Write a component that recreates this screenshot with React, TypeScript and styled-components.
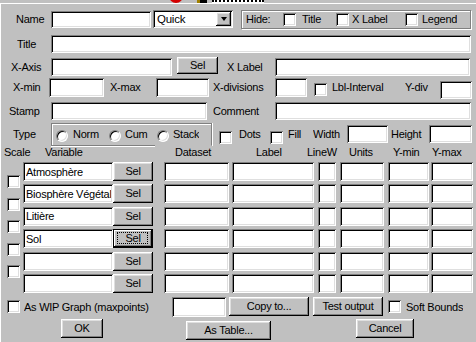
import React from "react";
import styled, { createGlobalStyle, css } from "styled-components";

const GlobalStyle = createGlobalStyle`
  html, body { margin: 0; padding: 0; background: #c0c0c0; }
  body { font-family: "Liberation Sans", Arial, sans-serif; font-size: 11px; color: #000; }
  * { box-sizing: border-box; }
`;

const sunken = css`
  box-shadow: inset 1px 1px #808080, inset -1px -1px #fff, inset 2px 2px #000,
    inset -2px -2px #dfdfdf;
`;

const raised = css`
  box-shadow: inset -1px -1px #000, inset 1px 1px #fff, inset -2px -2px #808080,
    inset 2px 2px #dfdfdf;
`;

type Box = { $ml?: number; $dy?: number; $w?: number; $h?: number };

const Screen = styled.div`
  width: 476px;
  height: 342px;
  overflow: hidden;
  background: #c0c0c0;
  font-family: "Liberation Sans", Arial, sans-serif;
  font-size: 11px;
  letter-spacing: -0.25px;
  color: #000;
`;

const TopStrip = styled.div`
  height: 3px;
  display: flex;
  align-items: flex-end;
  overflow: hidden;
`;

const RedBlob = styled.span`
  flex-shrink: 0;
  margin-left: 169px;
  width: 14px;
  height: 14px;
  border-radius: 50%;
  background: #d40000;
`;

const TinyIcon = styled.span`
  flex-shrink: 0;
  margin-left: 11px;
  width: 13px;
  height: 3px;
  background: linear-gradient(90deg, #c0c0c0 0 3px, #a08000 3px 6px, #000 6px 13px);
`;

const TitleSnip = styled.span`
  flex-shrink: 0;
  margin-left: 5px;
  width: 52px;
  height: 3px;
  background: #fff;
  border-top: 2px dotted #000;
`;

const Dialog = styled.div`
  height: 339px;
  border-top: 1px solid #fff;
  border-left: 1px solid #fff;
  display: flex;
  flex-direction: column;
`;

const Row = styled.div<{ $mt: number; $h: number }>`
  display: flex;
  align-items: flex-start;
  flex-shrink: 0;
  margin-top: ${(p) => p.$mt}px;
  height: ${(p) => p.$h}px;
`;

const Label = styled.span<Box>`
  display: block;
  flex-shrink: 0;
  margin-left: ${(p) => p.$ml ?? 0}px;
  margin-top: ${(p) => p.$dy ?? 0}px;
  width: ${(p) => (p.$w ? `${p.$w}px` : "auto")};
  height: ${(p) => p.$h ?? 18}px;
  line-height: ${(p) => p.$h ?? 18}px;
  white-space: nowrap;
  overflow: hidden;
`;

const Field = styled.input<Box>`
  flex-shrink: 0;
  margin: ${(p) => p.$dy ?? 0}px 0 0 ${(p) => p.$ml ?? 0}px;
  width: ${(p) => p.$w}px;
  height: ${(p) => p.$h ?? 18}px;
  border: 0;
  padding: 0 2px 0 3px;
  background: #fff;
  ${sunken};
  font: inherit;
  letter-spacing: inherit;
  color: #000;
  outline: none;
`;

const Btn = styled.button<Box & { $focus?: boolean }>`
  position: relative;
  flex-shrink: 0;
  margin: ${(p) => p.$dy ?? 0}px 0 0 ${(p) => p.$ml ?? 0}px;
  width: ${(p) => p.$w}px;
  height: ${(p) => p.$h ?? 19}px;
  padding: 0 0 1px;
  border: 0;
  background: #c0c0c0;
  font: inherit;
  letter-spacing: inherit;
  color: #000;
  ${raised};
  ${(p) =>
    p.$focus &&
    css`
      box-shadow: inset 0 0 0 1px #000, inset -2px -2px #000, inset 2px 2px #fff,
        inset -3px -3px #808080;
    `}
`;

const FocusRing = styled.span`
  position: absolute;
  left: 4px;
  right: 5px;
  top: 3px;
  bottom: 4px;
  border: 1px dotted #000;
`;

const Check = styled.span<Box>`
  display: block;
  flex-shrink: 0;
  width: 13px;
  height: 13px;
  margin: ${(p) => p.$dy ?? 0}px 0 0 ${(p) => p.$ml ?? 0}px;
  background: #fff;
  ${sunken};
`;

const RadioDot = styled.span<Box>`
  display: block;
  flex-shrink: 0;
  width: 12px;
  height: 12px;
  margin: 3px 0 0 ${(p) => p.$ml ?? 0}px;
  border-radius: 50%;
  background: #fff;
  border: 1px solid;
  border-color: #808080 #fff #fff #808080;
  box-shadow: inset 1px 1px #000, inset -1px -1px #dfdfdf;
`;

const Group = styled.div<Box & { $openBottom?: number }>`
  position: relative;
  display: flex;
  align-items: center;
  flex-shrink: 0;
  margin: ${(p) => p.$dy ?? 0}px 0 0 ${(p) => p.$ml ?? 0}px;
  width: ${(p) => p.$w}px;
  height: ${(p) => p.$h}px;
  padding-left: 4px;
  border: 1px solid #808080;
  box-shadow: inset 1px 1px #fff, 1px 1px #fff;
  ${(p) =>
    p.$openBottom &&
    css`
      border-bottom-color: transparent;
      box-shadow: inset 1px 1px #fff, 1px 0 #fff;
      &::after {
        content: "";
        position: absolute;
        left: -1px;
        bottom: -1px;
        width: ${p.$openBottom}px;
        height: 1px;
        background: #808080;
        box-shadow: 0 1px #fff;
      }
    `}
`;

const Combo = styled.div<Box>`
  display: flex;
  align-items: stretch;
  flex-shrink: 0;
  margin-left: ${(p) => p.$ml ?? 0}px;
  width: ${(p) => p.$w}px;
  height: ${(p) => p.$h}px;
  padding: 2px;
  background: #fff;
  ${sunken};
`;

const ComboText = styled.span`
  flex: 1;
  padding-left: 2px;
  line-height: 14px;
  font-size: 11.5px;
`;

const ComboButton = styled.span`
  width: 15px;
  display: flex;
  align-items: center;
  justify-content: center;
  background: #c0c0c0;
  ${raised};
`;

const Arrow = styled.span`
  width: 0;
  height: 0;
  border-left: 3.5px solid transparent;
  border-right: 3.5px solid transparent;
  border-top: 4px solid #000;
`;

const Header = styled.span<Box>`
  display: block;
  flex-shrink: 0;
  margin-left: ${(p) => p.$ml ?? 0}px;
  width: ${(p) => (p.$w ? `${p.$w}px` : "auto")};
  line-height: 12px;
  white-space: nowrap;
`;

const DataArea = styled.div`
  display: flex;
  flex-shrink: 0;
  margin-top: 4px;
  height: 131px;
`;

const CheckColumn = styled.div`
  display: flex;
  flex-direction: column;
  gap: 9.5px;
  margin-left: 6px;
  padding-top: 13px;
`;

const RowStack = styled.div`
  display: flex;
  flex-direction: column;
  gap: 3.4px;
  margin-left: 3px;
`;

const DataRow = styled.div`
  display: flex;
  height: 19px;
`;

const variables = ["Atmosphère", "Biosphère Végétale", "Litière", "Sol", "", ""];

export default function App() {
  return (
    <Screen>
      <GlobalStyle />
      <TopStrip>
        <RedBlob />
        <TinyIcon />
        <TitleSnip />
      </TopStrip>
      <Dialog>
        <Row $mt={6} $h={19}>
          <Label $ml={15} $w={35} $dy={1} $h={17}>Name</Label>
          <Field $w={100} $h={17} $dy={1} />
          <Combo $ml={2} $w={80} $h={18}>
            <ComboText>Quick</ComboText>
            <ComboButton>
              <Arrow />
            </ComboButton>
          </Combo>
          <Group $ml={8} $w={230} $h={19}>
            <Label $w={37} $h={17}>Hide:</Label>
            <Check />
            <Label $ml={6} $w={34} $h={17}>Title</Label>
            <Check />
            <Label $ml={3} $w={53} $h={17}>X Label</Label>
            <Check />
            <Label $ml={4} $h={17}>Legend</Label>
          </Group>
        </Row>

        <Row $mt={6} $h={18}>
          <Label $ml={16} $w={34}>Title</Label>
          <Field $w={420} />
        </Row>

        <Row $mt={5} $h={18}>
          <Label $ml={10} $w={40}>X-Axis</Label>
          <Field $w={121} />
          <Btn $ml={5} $w={41} $h={17} $dy={-1}>Sel</Btn>
          <Label $ml={9} $w={48}>X Label</Label>
          <Field $w={195} />
        </Row>

        <Row $mt={2} $h={21}>
          <Label $ml={12} $w={36} $h={19}>X-min</Label>
          <Field $w={55} $h={19} />
          <Label $ml={6} $w={46} $h={19}>X-max</Label>
          <Field $w={53} $h={19} />
          <Label $ml={4} $w={62} $h={19}>X-divisions</Label>
          <Field $w={32} $h={19} />
          <Check $ml={7} $dy={5} />
          <Label $ml={5} $w={73} $h={19}>Lbl-Interval</Label>
          <Label $w={35} $h={19}>Y-div</Label>
          <Field $w={32} $h={18} $dy={3} />
        </Row>

        <Row $mt={3} $h={18}>
          <Label $ml={8} $w={42}>Stamp</Label>
          <Field $w={156} />
          <Label $ml={6} $w={62}>Comment</Label>
          <Field $w={196} />
        </Row>

        <Row $mt={3} $h={23}>
          <Label $ml={12} $w={38} $h={23}>Type</Label>
          <Group $w={161} $h={23} $openBottom={104}>
            <RadioDot />
            <Label $ml={5} $w={31} $h={21}>Norm</Label>
            <RadioDot $ml={5} />
            <Label $ml={4} $w={27} $h={21}>Cum</Label>
            <RadioDot $ml={5} />
            <Label $ml={4} $h={21}>Stack</Label>
          </Group>
          <Check $ml={7} $dy={8} />
          <Label $ml={7} $w={31} $h={23}>Dots</Label>
          <Check $dy={8} />
          <Label $ml={5} $w={25} $h={23}>Fill</Label>
          <Label $w={34} $h={23}>Width</Label>
          <Field $w={41} $dy={2} />
          <Label $ml={3} $w={38} $h={23}>Height</Label>
          <Field $w={43} $dy={2} />
        </Row>

        <Row $mt={0} $h={12}>
          <Header $ml={3} $w={41}>Scale</Header>
          <Header $w={130}>Variable</Header>
          <Header $w={81}>Dataset</Header>
          <Header $w={51}>Label</Header>
          <Header $w={42}>LineW</Header>
          <Header $w={44}>Units</Header>
          <Header $w={39}>Y-min</Header>
          <Header>Y-max</Header>
        </Row>

        <DataArea>
          <CheckColumn>
            {[0, 1, 2, 3, 4].map((i) => (
              <Check key={i} />
            ))}
          </CheckColumn>
          <RowStack>
            {variables.map((v, i) => (
              <DataRow key={i}>
                <Field $w={90} $h={19} defaultValue={v} />
                <Btn $w={40} $h={19} $focus={i === 3}>
                  Sel
                  {i === 3 && <FocusRing />}
                </Btn>
                <Field $ml={11} $w={65} $h={19} />
                <Field $ml={3} $w={82} $h={19} />
                <Field $ml={4} $w={18} $h={19} />
                <Field $ml={4} $w={44} $h={19} />
                <Field $ml={4} $w={41} $h={19} />
                <Field $ml={2} $w={42} $h={19} />
              </DataRow>
            ))}
          </RowStack>
        </DataArea>

        <Row $mt={4} $h={20}>
          <Check $ml={6} $dy={3} />
          <Label $ml={4} $w={148} $h={20}>As WIP Graph (maxpoints)</Label>
          <Field $w={54} $h={20} />
          <Btn $ml={3} $w={80} $h={19}>Copy to...</Btn>
          <Btn $ml={4} $w={70} $h={19}>Test output</Btn>
          <Check $ml={5} $dy={3} />
          <Label $ml={5} $h={20}>Soft Bounds</Label>
        </Row>

        <Row $mt={2} $h={21}>
          <Btn $ml={60} $w={42} $h={19}>OK</Btn>
          <Btn $ml={83} $w={85} $h={19} $dy={2}>As Table...</Btn>
          <Btn $ml={85} $w={58} $h={19}>Cancel</Btn>
        </Row>
      </Dialog>
    </Screen>
  );
}
